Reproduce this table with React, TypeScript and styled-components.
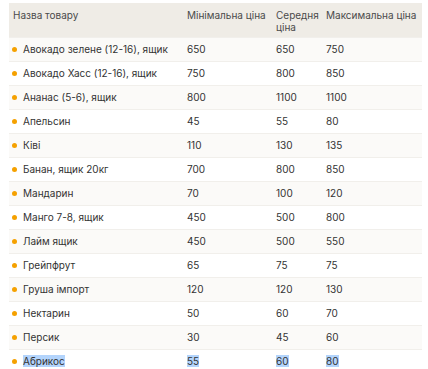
import styled, { createGlobalStyle } from 'styled-components';

const GlobalStyle = createGlobalStyle`
  body {
    margin: 0;
    background: #fff;
    font-family: Inter, "Noto Sans", sans-serif;
  }
`;

const Wrapper = styled.div`
  padding: 3px 6px 0 9px;
`;

const Table = styled.table`
  width: 413px;
  border-collapse: collapse;
  table-layout: fixed;
  font-size: 10px;
  color: #333;
`;

const HeadCell = styled.th<{ $w: number }>`
  box-sizing: border-box;
  width: ${(p) => p.$w}px;
  height: 34px;
  padding: 6px 4px 0;
  background: #efece6;
  color: #4a4a4a;
  font-weight: 400;
  text-align: left;
  vertical-align: top;
  line-height: 12px;
`;

const Row = styled.tr<{ $odd: boolean }>`
  background: ${(p) => (p.$odd ? '#fbfaf8' : '#fff')};
  border-top: 1px solid #f1efeb;
`;

const Cell = styled.td`
  height: 23px;
  padding: 0 4px;
  line-height: 12px;
  vertical-align: middle;
`;

const NameCell = styled(Cell)`
  padding-left: 3px;
`;

const Name = styled.div`
  display: flex;
  align-items: center;
  gap: 6px;
`;

const Dot = styled.span`
  width: 5px;
  height: 5px;
  border-radius: 50%;
  background: #f5a100;
  flex-shrink: 0;
`;

const Selected = styled.span<{ $on: boolean }>`
  background: ${(p) => (p.$on ? '#b3d4fc' : 'transparent')};
`;

const rows: [string, string, string, string][] = [
  ['Авокадо зелене (12-16), ящик', '650', '650', '750'],
  ['Авокадо Хасс (12-16), ящик', '750', '800', '850'],
  ['Ананас (5-6), ящик', '800', '1100', '1100'],
  ['Апельсин', '45', '55', '80'],
  ['Ківі', '110', '130', '135'],
  ['Банан, ящик 20кг', '700', '800', '850'],
  ['Мандарин', '70', '100', '120'],
  ['Манго 7-8, ящик', '450', '500', '800'],
  ['Лайм ящик', '450', '500', '550'],
  ['Грейпфрут', '65', '75', '75'],
  ['Груша імпорт', '120', '120', '130'],
  ['Нектарин', '50', '60', '70'],
  ['Персик', '30', '45', '60'],
  ['Абрикос', '55', '60', '80'],
];

export default function App() {
  return (
    <Wrapper>
      <GlobalStyle />
      <Table>
        <thead>
          <tr>
            <HeadCell $w={174}>Назва товару</HeadCell>
            <HeadCell $w={89}>Мінімальна ціна</HeadCell>
            <HeadCell $w={50}>Середня ціна</HeadCell>
            <HeadCell $w={100}>Максимальна ціна</HeadCell>
          </tr>
        </thead>
        <tbody>
          {rows.map(([name, min, avg, max], i) => {
            const sel = i === rows.length - 1;
            return (
              <Row key={name} $odd={i % 2 === 0}>
                <NameCell>
                  <Name>
                    <Dot />
                    <Selected $on={sel}>{name}</Selected>
                  </Name>
                </NameCell>
                <Cell><Selected $on={sel}>{min}</Selected></Cell>
                <Cell><Selected $on={sel}>{avg}</Selected></Cell>
                <Cell><Selected $on={sel}>{max}</Selected></Cell>
              </Row>
            );
          })}
        </tbody>
      </Table>
    </Wrapper>
  );
}
